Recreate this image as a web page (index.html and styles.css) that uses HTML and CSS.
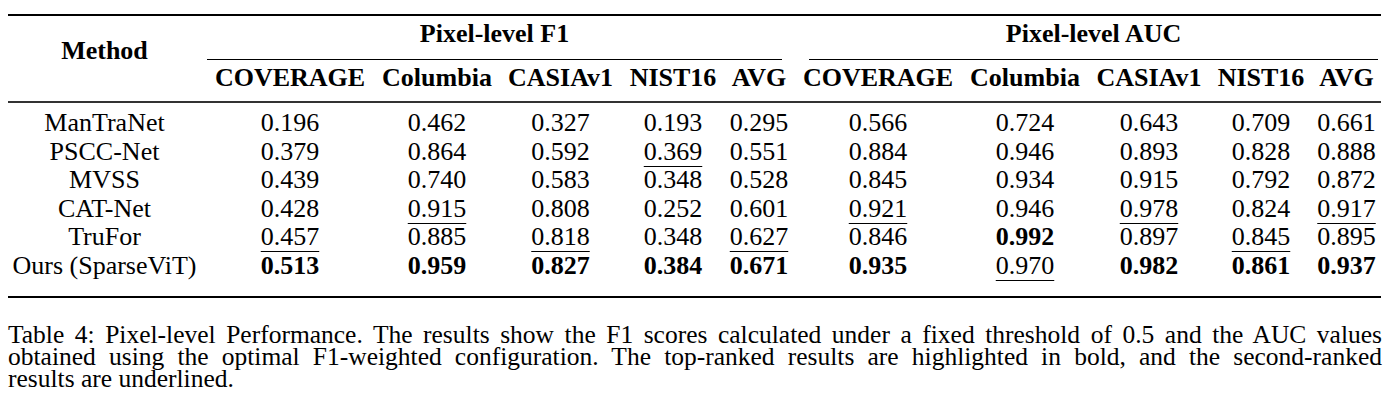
FILE: index.html
```html
<!DOCTYPE html>
<html lang="en">
<head>
<meta charset="utf-8">
<title>Table 4: Pixel-level Performance</title>
<link rel="stylesheet" href="styles.css">
</head>
<body>
<figure class="figure">
  <div class="table-frame">
    <table class="results">
      <colgroup>
        <col class="c-method">
        <col class="c-cov1">
        <col class="c-col1">
        <col class="c-cas1">
        <col class="c-nist1">
        <col class="c-avg1">
        <col class="c-cov2">
        <col class="c-col2">
        <col class="c-cas2">
        <col class="c-nist2">
        <col class="c-avg2">
      </colgroup>
      <thead>
        <tr class="group-row">
          <th rowspan="2" class="method-head">Method</th>
          <th colspan="5" class="group"><div class="group-label f1">Pixel-level F1</div></th>
          <th colspan="5" class="group"><div class="group-label auc">Pixel-level AUC</div></th>
        </tr>
        <tr class="sub-row">
          <th>COVERAGE</th>
          <th>Columbia</th>
          <th>CASIAv1</th>
          <th>NIST16</th>
          <th>AVG</th>
          <th>COVERAGE</th>
          <th>Columbia</th>
          <th>CASIAv1</th>
          <th>NIST16</th>
          <th>AVG</th>
        </tr>
      </thead>
      <tbody>
        <tr>
          <td class="method">ManTraNet</td>
          <td>0.196</td><td>0.462</td><td>0.327</td><td>0.193</td><td>0.295</td>
          <td>0.566</td><td>0.724</td><td>0.643</td><td>0.709</td><td>0.661</td>
        </tr>
        <tr>
          <td class="method">PSCC-Net</td>
          <td>0.379</td><td>0.864</td><td>0.592</td><td><span class="second">0.369</span></td><td>0.551</td>
          <td>0.884</td><td>0.946</td><td>0.893</td><td>0.828</td><td>0.888</td>
        </tr>
        <tr>
          <td class="method">MVSS</td>
          <td>0.439</td><td>0.740</td><td>0.583</td><td>0.348</td><td>0.528</td>
          <td>0.845</td><td>0.934</td><td>0.915</td><td>0.792</td><td>0.872</td>
        </tr>
        <tr>
          <td class="method">CAT-Net</td>
          <td>0.428</td><td><span class="second">0.915</span></td><td>0.808</td><td>0.252</td><td>0.601</td>
          <td><span class="second">0.921</span></td><td>0.946</td><td><span class="second">0.978</span></td><td>0.824</td><td><span class="second">0.917</span></td>
        </tr>
        <tr>
          <td class="method">TruFor</td>
          <td><span class="second">0.457</span></td><td>0.885</td><td><span class="second">0.818</span></td><td>0.348</td><td><span class="second">0.627</span></td>
          <td>0.846</td><td class="best">0.992</td><td>0.897</td><td><span class="second">0.845</span></td><td>0.895</td>
        </tr>
        <tr>
          <td class="method">Ours (SparseViT)</td>
          <td class="best">0.513</td><td class="best">0.959</td><td class="best">0.827</td><td class="best">0.384</td><td class="best">0.671</td>
          <td class="best">0.935</td><td><span class="second">0.970</span></td><td class="best">0.982</td><td class="best">0.861</td><td class="best">0.937</td>
        </tr>
      </tbody>
    </table>
  </div>
  <figcaption class="caption">
    <span class="cap-line">Table 4: Pixel-level Performance. The results show the F1 scores calculated under a fixed threshold of 0.5 and the AUC values</span>
    <span class="cap-line">obtained using the optimal F1-weighted configuration. The top-ranked results are highlighted in bold, and the second-ranked</span>
    <span class="cap-line last">results are underlined.</span>
  </figcaption>
</figure>
</body>
</html>
```

FILE: styles.css
```css
* {
  box-sizing: border-box;
}

html,
body {
  margin: 0;
  padding: 0;
  background: #ffffff;
}

body {
  font-family: "Liberation Serif", "Times New Roman", serif;
  color: #000000;
}

.figure {
  margin: 14px 0 0 8px;
  width: 1374px;
}

.table-frame {
  width: 1373px;
  border-top: 2px solid #000000;
  border-bottom: 2px solid #000000;
}

.results {
  width: 1373px;
  table-layout: fixed;
  border-collapse: separate;
  border-spacing: 0;
  font-size: 26px;
}

.c-method { width: 197px; }
.c-cov1 { width: 170px; }
.c-col1 { width: 124px; }
.c-cas1 { width: 123px; }
.c-nist1 { width: 102px; }
.c-avg1 { width: 70px; }
.c-cov2 { width: 168px; }
.c-col2 { width: 126px; }
.c-cas2 { width: 122px; }
.c-nist2 { width: 102px; }
.c-avg2 { width: 69px; }

.results th,
.results td {
  padding: 0;
  text-align: center;
  white-space: nowrap;
}

.results th {
  font-weight: 700;
  line-height: 28px;
}

.results .method-head {
  vertical-align: top;
  padding: 21px 4px 0 0;
  border-bottom: 2px solid #333333;
}

.results .group {
  vertical-align: top;
  padding-top: 4px;
}

.group-label {
  line-height: 28px;
  padding-bottom: 11px;
  border-bottom: 1px solid #000000;
}

.group-label.f1 {
  margin: 0 12px 0 2px;
}

.group-label.auc {
  margin: 0 3px 0 15px;
}

.results .sub-row th {
  vertical-align: top;
  padding: 4px 0 9px;
  border-bottom: 2px solid #333333;
}

.results td {
  font-weight: 400;
  line-height: 28.6px;
}

.results td.method {
  padding-right: 4px;
}

.results tbody tr:first-child td {
  padding-top: 6px;
}

.results tbody tr:last-child td {
  padding-bottom: 15px;
}

.results td.method {
  font-weight: 400;
}

.results .best {
  font-weight: 700;
}

.second {
  text-decoration: underline;
  text-decoration-thickness: 1px;
  text-underline-offset: 6px;
}

.caption {
  margin-top: 26px;
  width: 1374px;
  font-size: 25.5px;
  line-height: 22.4px;
}

.cap-line {
  display: block;
  text-align: justify;
  text-align-last: justify;
}

.cap-line.last {
  text-align: left;
  text-align-last: auto;
}
```
